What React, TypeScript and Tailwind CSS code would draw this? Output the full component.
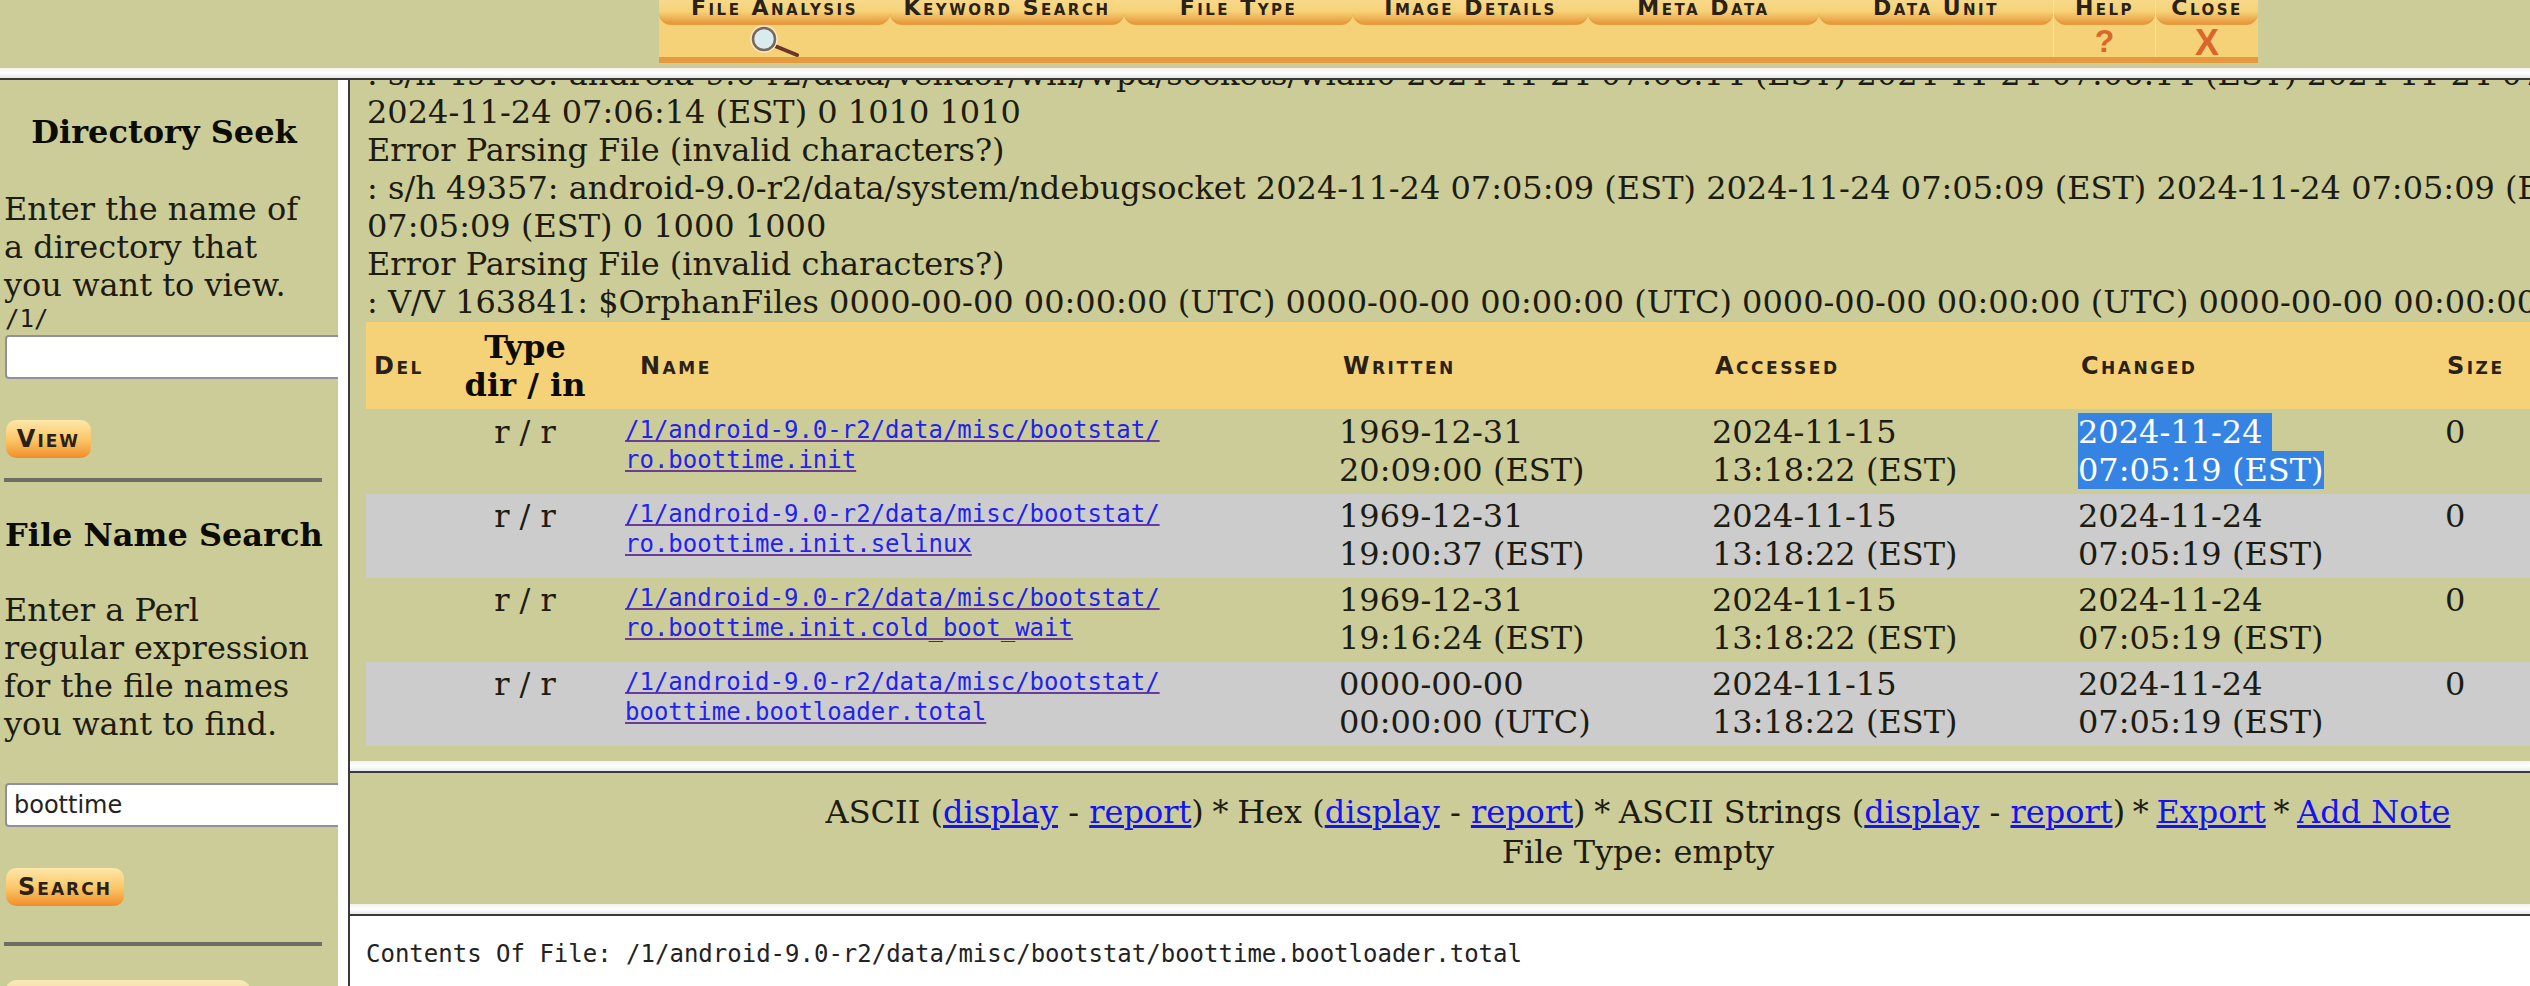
const serif = "font-['DejaVu_Serif',serif]";

const tabs = [
  { label: "File Analysis", w: "w-[231px]" },
  { label: "Keyword Search", w: "w-[234px]" },
  { label: "File Type", w: "w-[229px]" },
  { label: "Image Details", w: "w-[235px]" },
  { label: "Meta Data", w: "w-[231px]" },
  { label: "Data Unit", w: "w-[234px]" },
  { label: "Help", w: "w-[102px]" },
  { label: "Close", w: "w-[103px]" },
];

const rows = [
  { name: "ro.boottime.init", written: ["1969-12-31", "20:09:00 (EST)"], bg: "bg-[#cccc99]", selected: true },
  { name: "ro.boottime.init.selinux", written: ["1969-12-31", "19:00:37 (EST)"], bg: "bg-[#cccccc]" },
  { name: "ro.boottime.init.cold_boot_wait", written: ["1969-12-31", "19:16:24 (EST)"], bg: "bg-[#cccc99]" },
  { name: "boottime.bootloader.total", written: ["0000-00-00", "00:00:00 (UTC)"], bg: "bg-[#cccccc]" },
];

const cap = "font-['DejaVu_Sans',sans-serif] font-bold [font-variant:small-caps] text-[#2a2118] whitespace-nowrap";
const grid = "grid grid-cols-[90px_138px_743px_373px_366px_367px_100px]";

function Magnifier() {
  return (
    <svg width="50" height="32" viewBox="0 0 50 32" className="block">
      <line x1="25" y1="21" x2="47" y2="30" stroke="#6b3528" strokeWidth="4" strokeLinecap="round" />
      <circle cx="14" cy="14" r="13" fill="none" stroke="#f8ead0" strokeWidth="1.5" />
      <circle cx="14" cy="14" r="11" fill="#d8ecee" stroke="#7a665c" strokeWidth="2.5" />
    </svg>
  );
}

function TabStrip() {
  return (
    <div className="flex justify-start h-[68px] bg-[#cccc99] pl-[659px]">
      <div className="flex h-[63px] bg-[#f5d277] border-b-[6px] border-[#e59a3e]">
        {tabs.map((t, i) => (
          <div key={t.label} className={`${t.w} flex flex-col ${i > 5 ? "border-l border-[#f9e3a8]" : ""}`}>
            <div className="h-[25px] flex items-end justify-center pb-[6px] rounded-b-[12px] bg-gradient-to-b from-[#f8d98a] via-[#f5d277] to-[#e89a3c] border-b-2 border-[#e59a3e]">
              <span className={`${cap} text-[22px] leading-[18px] tracking-[2.5px]`}>{t.label}</span>
            </div>
            <div className="flex-1 flex items-center justify-center">
              {i === 0 && <Magnifier />}
              {i === 6 && <span className="font-['Liberation_Sans',sans-serif] font-bold text-[32px] leading-none text-[#d9662a]">?</span>}
              {i === 7 && <span className="font-['Liberation_Sans',sans-serif] font-bold text-[36px] leading-none text-[#d9662a]">X</span>}
            </div>
          </div>
        ))}
      </div>
    </div>
  );
}

function HBorder() {
  return <div className="h-[12px] shrink-0 bg-gradient-to-b from-[#f2f2ec] via-white to-[#e8e8e8] border-b-[2px] border-[#3a3a3a]" />;
}

function OrangeButton({ label, w }: { label: string; w: string }) {
  return (
    <div className={`${w} h-[38px] ml-[6px] rounded-[10px] flex items-center justify-center bg-gradient-to-b from-[#fde7a8] via-[#fbc869] to-[#f08d26]`}>
      <span className={`${cap} text-[24px] leading-none tracking-[2px]`}>{label}</span>
    </div>
  );
}

function Sidebar() {
  return (
    <div className={`w-[338px] shrink-0 overflow-hidden bg-[#cccc99] text-[32px] leading-[38px] text-[#1c1c12] ${serif}`}>
      <h2 className="font-bold text-center w-[328px] mt-[33px] text-[#0c0c06]">Directory Seek</h2>
      <p className="mt-[39px] pl-[4px] w-[322px]">Enter the name of a directory that you want to view.</p>
      <div className="pl-[5px] font-['DejaVu_Sans_Mono',monospace] text-[24px] leading-[28px] h-[30px] mt-px">/1/</div>
      <input readOnly className="block ml-[5px] w-[400px] h-[44px] bg-white border-2 border-[#8f8f9d] rounded-[4px]" />
      <div className="h-[41px]" />
      <OrangeButton label="View" w="w-[85px]" />
      <div className="mt-[20px] ml-[4px] w-[318px] h-[4px] bg-[#6e6e66]" />
      <h2 className="font-bold pl-[5px] mt-[34px] text-[#0c0c06] whitespace-nowrap">File Name Search</h2>
      <p className="mt-[37px] pl-[4px] w-[322px]">Enter a Perl regular expression for the file names you want to find.</p>
      <input readOnly value="boottime" className="block ml-[5px] mt-[40px] pl-[7px] w-[400px] h-[44px] bg-white border-2 border-[#8f8f9d] rounded-[4px] font-['DejaVu_Sans',sans-serif] text-[24px] text-[#222]" />
      <div className="h-[41px]" />
      <OrangeButton label="Search" w="w-[118px]" />
      <div className="mt-[36px] ml-[4px] w-[318px] h-[4px] bg-[#6e6e66]" />
      <div className="mt-[34px] ml-[6px] w-[244px] h-[38px] rounded-[10px] bg-gradient-to-b from-[#f6eab8] to-[#fbc869]" />
    </div>
  );
}

function Link({ children }: { children: string }) {
  return <a href="#" className="text-[#1414ee] underline">{children}</a>;
}

function Star({ tight }: { tight?: boolean }) {
  return <span className={tight ? "-mx-[2.5px]" : "-mx-[1.5px]"}> * </span>;
}

function FileTable() {
  return (
    <div className="ml-[16px] mt-px w-[2264px]">
      <div className={`${grid} h-[87px] items-center bg-[#f5d277]`}>
        <span className={`${cap} pl-[8px] text-[24px] tracking-[2.5px]`}>Del</span>
        <div className="font-bold text-center text-[#0c0c06]">Type<br />dir / in</div>
        <span className={`${cap} pl-[46px] text-[24px] tracking-[2.5px]`}>Name</span>
        <span className={`${cap} pl-[6px] text-[24px] tracking-[2.5px]`}>Written</span>
        <span className={`${cap} pl-[5px] text-[24px] tracking-[2.5px]`}>Accessed</span>
        <span className={`${cap} pl-[5px] text-[24px] tracking-[2.5px]`}>Changed</span>
        <span className={`${cap} pl-[4px] text-[24px] tracking-[2.5px]`}>Size</span>
      </div>
      {rows.map((r, i) => (
        <div key={r.name} className={`${grid} ${i === 0 ? "h-[85px] pt-[4px]" : "h-[84px] pt-[3px]"} ${r.bg}`}>
          <div />
          <div className="text-center">r / r</div>
          <div className="pl-[31px] pt-[2px] font-['DejaVu_Sans_Mono',monospace] text-[24px] leading-[30px]">
            <a href="#" className="text-[#2222ee] underline decoration-[#6a3d9a]">/1/android-9.0-r2/data/misc/bootstat/<br />{r.name}</a>
          </div>
          <div className="pl-[2px]">{r.written[0]}<br />{r.written[1]}</div>
          <div className="pl-[2px]">2024-11-15<br />13:18:22 (EST)</div>
          {r.selected ? (
            <div className="pl-[2px] text-white">
              <div className="w-[194px] bg-[#3584e4]">2024-11-24</div>
              <div className="w-[246px] bg-[#3584e4]">07:05:19 (EST)</div>
            </div>
          ) : (
            <div className="pl-[2px]">2024-11-24<br />07:05:19 (EST)</div>
          )}
          <div className="pl-[2px]">0</div>
        </div>
      ))}
    </div>
  );
}

export default function App() {
  return (
    <div className={`h-[986px] w-[2530px] overflow-hidden bg-white flex flex-col ${serif}`}>
      <TabStrip />
      <HBorder />
      <div className="flex flex-1 min-h-0">
        <Sidebar />
        <div className="w-[12px] shrink-0 bg-white border-r-[2px] border-[#3a3a3a]" />
        <div className="flex-1 min-w-0 flex flex-col text-[32px] leading-[38px] text-[#1c1c12]">
          <div className="h-[681px] shrink-0 overflow-hidden bg-[#cccc99]">
            <div className="-mt-[25px] pl-[17px] whitespace-nowrap">
              <div>: s/h 49406: android-9.0-r2/data/vendor/wifi/wpa/sockets/wlan0 2024-11-24 07:06:14 (EST) 2024-11-24 07:06:14 (EST) 2024-11-24 07:06:14 (EST)</div>
              <div>2024-11-24 07:06:14 (EST) 0 1010 1010</div>
              <div>Error Parsing File (invalid characters?)</div>
              <div>: s/h 49357: android-9.0-r2/data/system/ndebugsocket 2024-11-24 07:05:09 (EST) 2024-11-24 07:05:09 (EST) 2024-11-24 07:05:09 (EST)</div>
              <div>07:05:09 (EST) 0 1000 1000</div>
              <div>Error Parsing File (invalid characters?)</div>
              <div>: V/V 163841: $OrphanFiles 0000-00-00 00:00:00 (UTC) 0000-00-00 00:00:00 (UTC) 0000-00-00 00:00:00 (UTC) 0000-00-00 00:00:00 (UTC)</div>
            </div>
            <FileTable />
          </div>
          <HBorder />
          <div className="h-[131px] shrink-0 overflow-hidden bg-[#cccc99]">
            <div className="w-[2576px] pt-[18px] text-center whitespace-nowrap">
              <div className="leading-[42px]">
                ASCII (<Link>display</Link> - <Link>report</Link>)<Star />Hex (<Link>display</Link> - <Link>report</Link>)<Star />ASCII Strings (<Link>display</Link> - <Link>report</Link>)<Star tight /><Link>Export</Link><Star tight /><Link>Add Note</Link>
              </div>
              <div>File Type: empty</div>
            </div>
          </div>
          <HBorder />
          <div className="flex-1 bg-white pl-[16px] pt-[24px] font-['DejaVu_Sans_Mono',monospace] text-[24px] leading-[28px] text-[#222] whitespace-nowrap">
            Contents Of File: /1/android-9.0-r2/data/misc/bootstat/boottime.bootloader.total
          </div>
        </div>
      </div>
    </div>
  );
}
